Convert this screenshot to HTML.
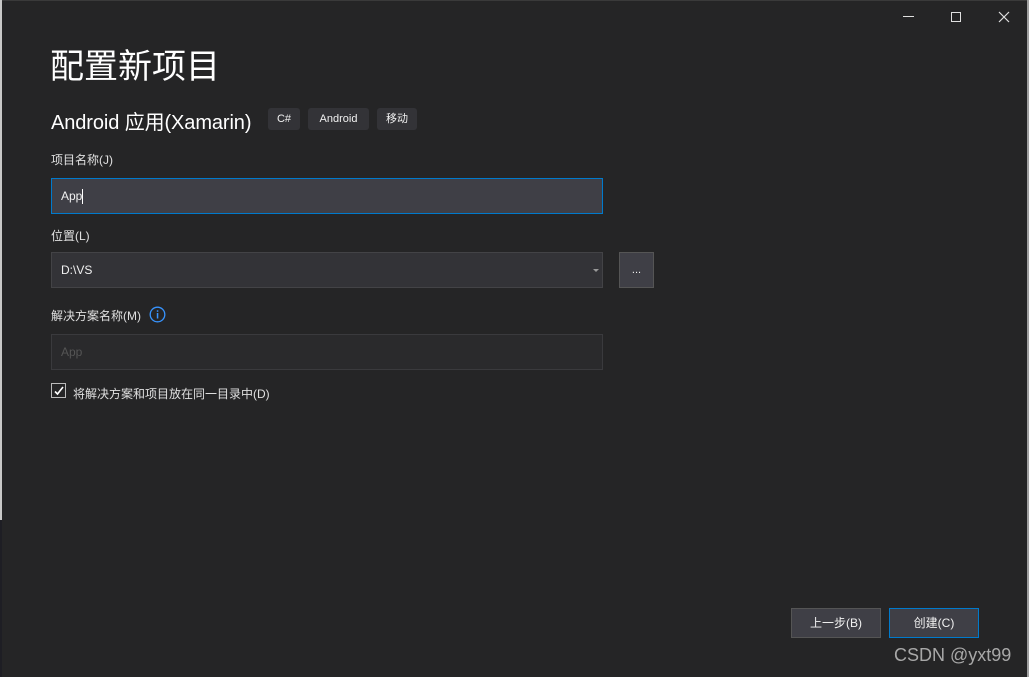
<!DOCTYPE html>
<html><head><meta charset="utf-8"><style>
*{margin:0;padding:0;box-sizing:border-box}
body{width:1029px;height:677px;background:#252526;position:relative;overflow:hidden;font-family:"Liberation Sans","Noto Sans CJK SC",sans-serif;color:#f1f1f1}
.a{position:absolute}
.l{font-size:12px;color:#e0e0e0}
.in{position:absolute;left:51px;width:552px;height:36px;background:#333337;border:1px solid #434346;font-size:12px;padding:0 0 0 9px;line-height:34px}
.tag{position:absolute;top:108px;height:22px;background:#333337;border-radius:3px;font-size:11px;line-height:22px;text-align:center;color:#f1f1f1}
.btn{position:absolute;top:608px;height:30px;background:#3f3f46;border:1px solid #555;font-size:12px;text-align:center;line-height:28px}
</style></head><body>
<div class="a" style="left:0;top:0;width:2px;height:520px;background:#c8c8c8"></div>
<div class="a" style="left:0;top:520px;width:2px;height:157px;background:#1e1e24"></div>
<div class="a" style="left:1027px;top:0;width:2px;height:677px;background:#a0a0a0"></div>
<div class="a" style="left:2px;top:0;width:1025px;height:1px;background:#3a3a3a"></div>
<div class="a" style="left:903px;top:16px;width:11px;height:1px;background:#e0e0e0"></div>
<div class="a" style="left:951px;top:12px;width:10px;height:10px;border:1px solid #e0e0e0"></div>
<svg class="a" style="left:998px;top:11px" width="12" height="12"><path d="M1 1L11 11M11 1L1 11" stroke="#e0e0e0" stroke-width="1.2"/></svg>
<div class="a" style="left:50px;top:39px;font-size:34px;color:#fff">配置新项目</div>
<div class="a" style="left:51px;top:106px;font-size:20px;letter-spacing:-0.1px;color:#fff">Android 应用(Xamarin)</div>
<div class="tag" style="left:268px;width:32px">C#</div>
<div class="tag" style="left:308px;width:61px">Android</div>
<div class="tag" style="left:377px;width:40px">移动</div>
<div class="a l" style="left:51px;top:151px">项目名称(J)</div>
<div class="in" style="top:178px;background:#3f3f46;border-color:#007acc">App<span style="display:inline-block;width:1px;height:15px;background:#fff;vertical-align:middle"></span></div>
<div class="a l" style="left:51px;top:227px">位置(L)</div>
<div class="in" style="top:252px">D:\VS<span style="position:absolute;right:3px;top:16px;border:3px solid transparent;border-top:3px solid #999"></span></div>
<div class="a" style="left:619px;top:252px;width:35px;height:36px;background:#3f3f46;border:1px solid #555;font-size:11px;text-align:center;line-height:34px">...</div>
<div class="a l" style="left:51px;top:307px">解决方案名称(M)</div>
<svg class="a" style="left:149px;top:306px" width="17" height="17"><circle cx="8.5" cy="8.5" r="7.3" fill="none" stroke="#3794ff" stroke-width="1.3"/><rect x="7.8" y="7" width="1.5" height="5.5" fill="#3794ff"/><rect x="7.8" y="4.3" width="1.5" height="1.5" fill="#3794ff"/></svg>
<div class="in" style="top:334px;background:#2a2a2c;border-color:#3a3a3d;color:#555">App</div>
<div class="a" style="left:51px;top:383px;width:15px;height:15px;border:1px solid #bbb;background:#252526"></div>
<svg class="a" style="left:53px;top:385px" width="12" height="12"><path d="M2 6.5L4.5 9L10 2" stroke="#fff" stroke-width="1.6" fill="none"/></svg>
<div class="a l" style="left:73px;top:385px">将解决方案和项目放在同一目录中(D)</div>
<div class="btn" style="left:791px;width:90px">上一步(B)</div>
<div class="btn" style="left:889px;width:90px;border-color:#007acc">创建(C)</div>
<div class="a" style="left:894px;top:645px;font-size:18px;color:#a8a8a8">CSDN @yxt99</div>
</body></html>
